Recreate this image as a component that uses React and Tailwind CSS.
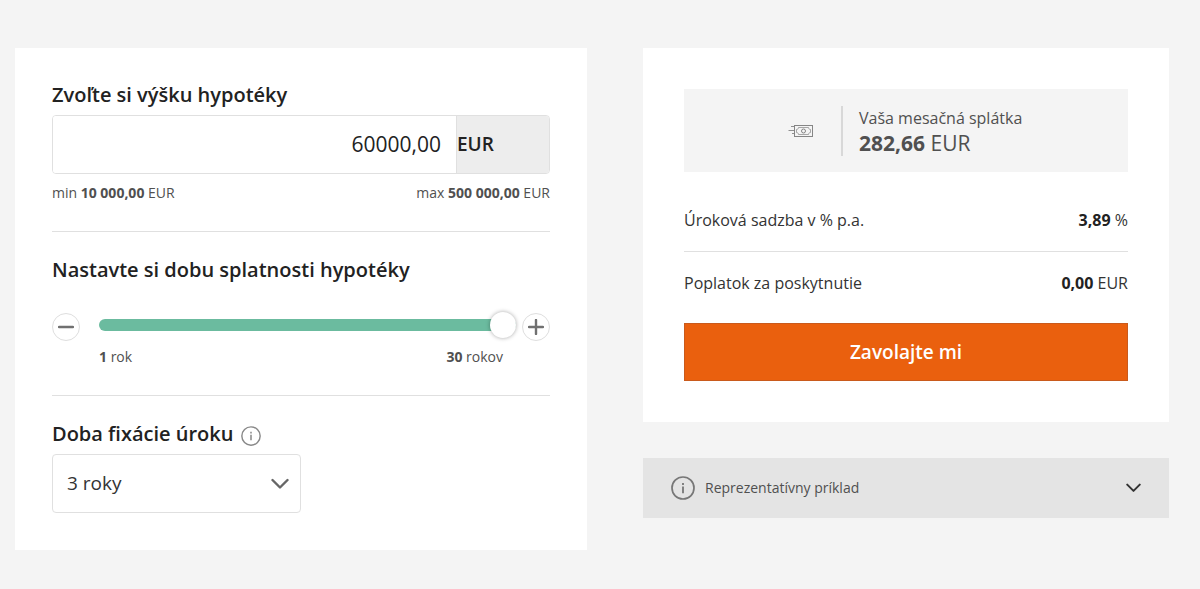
import React, { useState } from "react";

function InfoIcon({ className }) {
  return (
    <svg viewBox="0 0 24 24" className={className} fill="none" stroke="currentColor" aria-hidden="true">
      <circle cx="12" cy="12" r="11" strokeWidth="1.7" />
      <path d="M12 10.6v6.6M12 7v2" strokeWidth="1.8" />
    </svg>
  );
}

function Chevron({ className }) {
  return (
    <svg
      viewBox="0 0 18 12"
      className={className}
      fill="none"
      stroke="currentColor"
      strokeWidth="2.4"
      strokeLinecap="round"
      strokeLinejoin="round"
      aria-hidden="true"
    >
      <path d="M1.5 2 9 9.5 16.5 2" />
    </svg>
  );
}

function MoneyIcon() {
  return (
    <svg viewBox="0 0 26 14" className="h-[14px] w-[26px] text-[#858585]" fill="none" stroke="currentColor" aria-hidden="true">
      <rect x="6.5" y="1.5" width="18" height="11" />
      <path
        d="M10.5 3.5h10c0 1.2.8 2 2 2v3c-1.2 0-2 .8-2 2h-10c0-1.2-.8-2-2-2v-3c1.2 0 2-.8 2-2z"
        strokeWidth="0.7"
      />
      <circle cx="15.5" cy="7" r="2" />
      <path d="M3 2.5h3.500M0.5 6.5h6M4 9.5h2.5" strokeWidth="0.9" />
    </svg>
  );
}

function RoundButton({ label, path, onClick }) {
  return (
    <button
      type="button"
      aria-label={label}
      onClick={onClick}
      className="flex h-7 w-7 shrink-0 items-center justify-center rounded-full border border-[#dedede] bg-white text-[#707070]"
    >
      <svg viewBox="0 0 16 16" className="h-4 w-4" fill="none" stroke="currentColor" strokeWidth="2.4" strokeLinecap="round">
        <path d={path} />
      </svg>
    </button>
  );
}

function ResultRow({ label, value, unit }) {
  return (
    <div className="flex items-center justify-between text-base leading-6 text-[#333]">
      <dt>{label}</dt>
      <dd>
        <b className="font-bold text-[#222]">{value}</b> {unit}
      </dd>
    </div>
  );
}

export default function App() {
  const [amount, setAmount] = useState("60000,00");
  const [years, setYears] = useState(30);
  const [fixation, setFixation] = useState("3");
  const [open, setOpen] = useState(false);

  return (
    <main className="grid min-h-screen grid-cols-[572fr_526fr] items-start gap-14 bg-[#f4f4f4] pt-12 pr-[31px] pl-[15px] font-['Open_Sans','Noto_Sans',sans-serif] text-[#222]">
      <form className="bg-white px-[37px] pt-8 pb-[37px]">
        <section className="border-b border-[#e0e0e0] pb-[27px]">
          <label htmlFor="amount" className="block text-xl leading-[30px] font-semibold">
            Zvoľte si výšku hypotéky
          </label>
          <div className="mt-[5px] flex h-[59px] overflow-hidden rounded border border-[#e0e0e0]">
            <input
              id="amount"
              inputMode="decimal"
              value={amount}
              onChange={(e) => setAmount(e.target.value)}
              className="min-w-0 flex-1 bg-white pr-[15px] text-right text-[21px] outline-none"
            />
            <span className="flex w-[93px] items-center border-l border-[#e0e0e0] bg-[#ededed] text-[19px] font-semibold">
              EUR
            </span>
          </div>
          <div className="mt-2 flex justify-between text-sm leading-[22px] text-[#505050]">
            <span>
              min <b className="font-bold">10 000,00</b> EUR
            </span>
            <span>
              max <b className="font-bold">500 000,00</b> EUR
            </span>
          </div>
        </section>

        <section className="border-b border-[#e0e0e0] pt-[23px] pb-[27px]">
          <label htmlFor="years" className="block text-xl leading-[30px] font-semibold">
            Nastavte si dobu splatnosti hypotéky
          </label>
          <div className="mt-7 flex items-start">
            <RoundButton label="Menej rokov" path="M1 8h14" onClick={() => setYears(Math.max(1, years - 1))} />
            <input
              id="years"
              type="range"
              min="1"
              max="30"
              value={years}
              onChange={(e) => setYears(Number(e.target.value))}
              className="mr-1.5 ml-[19px] h-6 min-w-0 flex-1 appearance-none bg-transparent [&::-webkit-slider-runnable-track]:h-3 [&::-webkit-slider-runnable-track]:rounded-md [&::-webkit-slider-runnable-track]:bg-[#6bbb9f] [&::-webkit-slider-thumb]:-mt-[7px] [&::-webkit-slider-thumb]:h-[26px] [&::-webkit-slider-thumb]:w-[26px] [&::-webkit-slider-thumb]:appearance-none [&::-webkit-slider-thumb]:rounded-full [&::-webkit-slider-thumb]:bg-white [&::-webkit-slider-thumb]:shadow-[0_0_4px_rgba(0,0,0,0.35)]"
            />
            <RoundButton label="Viac rokov" path="M1 8h14M8 1v14" onClick={() => setYears(Math.min(30, years + 1))} />
          </div>
          <div className="mt-[5px] flex justify-between px-[47px] text-sm leading-[22px] text-[#505050]">
            <span>
              <b className="font-bold">1</b> rok
            </span>
            <span>
              <b className="font-bold">30</b> rokov
            </span>
          </div>
        </section>

        <section className="pt-[23px]">
          <div className="flex items-center gap-2">
            <label htmlFor="fixation" className="text-xl leading-[30px] font-semibold">
              Doba fixácie úroku
            </label>
            <button type="button" aria-label="Viac informácií" className="pt-1 text-[#888]">
              <InfoIcon className="h-5 w-5" />
            </button>
          </div>
          <div className="mt-[5px] grid w-1/2 items-center">
            <select
              id="fixation"
              value={fixation}
              onChange={(e) => setFixation(e.target.value)}
              className="col-start-1 row-start-1 h-[59px] appearance-none rounded border border-[#e0e0e0] bg-white px-3.5 text-[19px] text-[#333]"
            >
              <option value="3">3 roky</option>
              <option value="5">5 rokov</option>
              <option value="10">10 rokov</option>
            </select>
            <Chevron className="pointer-events-none col-start-1 row-start-1 mr-3 h-3 w-[18px] justify-self-end text-[#666]" />
          </div>
        </section>
      </form>

      <div>
        <section className="bg-white px-[41px] py-[41px]">
          <div className="flex h-[83px] items-center bg-[#f4f4f4]">
            <div className="flex w-[157px] justify-end pr-[27px]">
              <MoneyIcon />
            </div>
            <div className="border-l-2 border-[#d8d8d8] pl-4 text-[#505050]">
              <p className="text-base leading-6">Vaša mesačná splátka</p>
              <p className="text-[21px] leading-[26px]">
                <b className="font-bold">282,66</b> EUR
              </p>
            </div>
          </div>
          <dl className="mt-9">
            <ResultRow label="Úroková sadzba v % p.a." value="3,89" unit="%" />
            <hr className="my-[19px] border-[#e0e0e0]" />
            <ResultRow label="Poplatok za poskytnutie" value="0,00" unit="EUR" />
          </dl>
          <button
            type="button"
            className="mt-7 h-[58px] w-full border border-[#c95a1c] bg-[#ea600e] text-[19px] font-semibold text-white"
          >
            Zavolajte mi
          </button>
        </section>

        <button
          type="button"
          aria-expanded={open}
          onClick={() => setOpen(!open)}
          className="mt-9 flex h-[60px] w-full items-center bg-[#e4e4e4] px-7 text-left text-sm text-[#505050]"
        >
          <InfoIcon className="h-6 w-6 text-[#777]" />
          <span className="ml-2.5 flex-1">Reprezentatívny príklad</span>
          <Chevron className="h-2.5 w-[15px] text-[#333]" />
        </button>
      </div>
    </main>
  );
}
